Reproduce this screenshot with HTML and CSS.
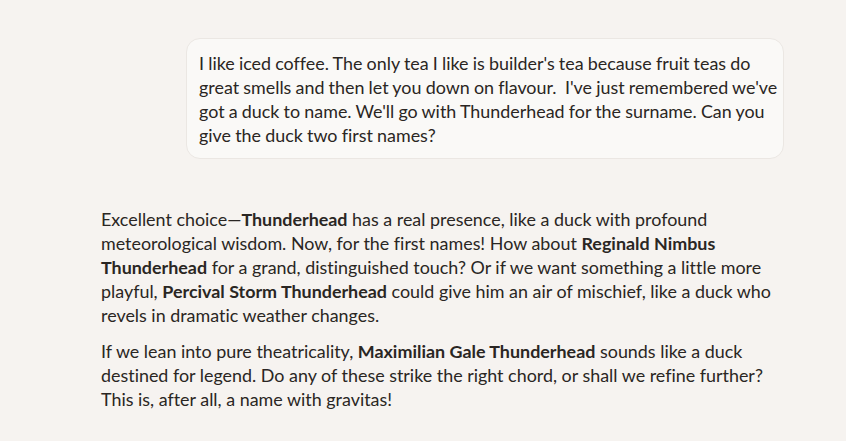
FILE: index.html
```html
<!DOCTYPE html>
<html lang="en">
<head>
<meta charset="utf-8">
<title>Chat</title>
<link rel="stylesheet" href="styles.css">
</head>
<body>
<main class="thread">
  <div class="user-row">
    <div class="bubble">I like iced coffee. The only tea I like is builder's tea because fruit teas do great smells and then let you down on flavour.&nbsp; I've just remembered we've got a duck to name. We'll go with Thunderhead for the surname. Can you give the duck two first names?</div>
  </div>
  <div class="reply">
    <p>Excellent choice—<b>Thunderhead</b> has a real presence, like a duck with profound meteorological wisdom. Now, for the first names! How about <b>Reginald Nimbus Thunderhead</b> for a grand, distinguished touch? Or if we want something a little more playful, <b>Percival Storm Thunderhead</b> could give him an air of mischief, like a duck who revels in dramatic weather changes.</p>
    <p>If we lean into pure theatricality, <b>Maximilian Gale Thunderhead</b> sounds like a duck destined for legend. Do any of these strike the right chord, or shall we refine further? This is, after all, a name with gravitas!</p>
  </div>
</main>
</body>
</html>
```

FILE: styles.css
```css
html, body {
  margin: 0;
  padding: 0;
  background: #f6f3f0;
}
body {
  font-family: Lato, "Noto Sans", sans-serif;
  font-size: 17.9px;
  line-height: 24px;
  color: #2a2623;
  font-variant-ligatures: none;
}
.thread {
  width: 683px;
  margin-left: 101px;
  padding-top: 38px;
}
.user-row {
  display: flex;
  justify-content: flex-end;
}
.bubble {
  width: 584px;
  padding: 12px 0 11px 12px;
  background: #faf9f7;
  border: 1px solid #ebe7e3;
  border-radius: 14px;
  word-spacing: -0.4px;
}
.reply {
  padding-top: 48px;
}
.reply p {
  margin: 0 0 12px 0;
}
.reply b {
  font-weight: 700;
}
```
